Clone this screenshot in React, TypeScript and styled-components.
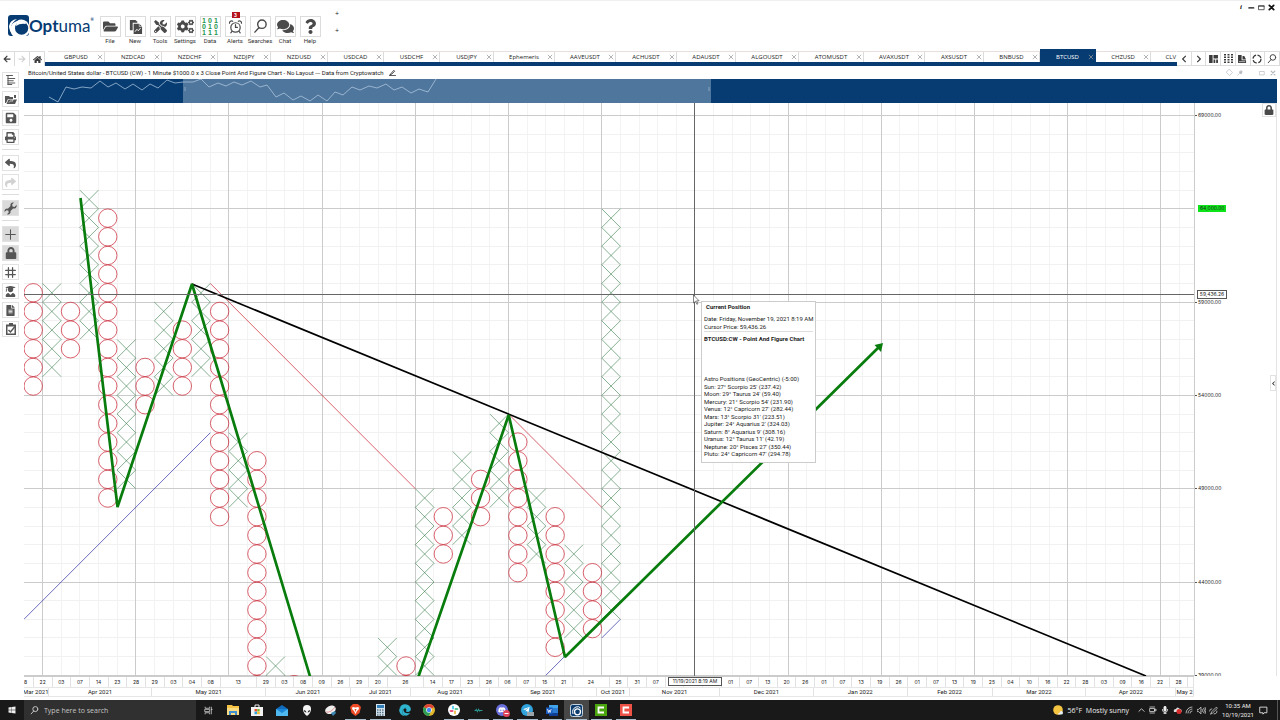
import React from "react";
import styled, { createGlobalStyle, css } from "styled-components";
import {
  FaFolderOpen, FaTools, FaCogs, FaComments, FaQuestion, FaSave, FaPrint, FaReply, FaShare,
  FaLock, FaUserGraduate, FaFileAlt, FaHome, FaArrowLeft, FaArrowRight,
  FaChevronLeft, FaChevronRight, FaWindows, FaDiscord, FaTelegramPlane, FaEdge, FaMicrophone,
} from "react-icons/fa";

const navy = "#073c73";
const line = "#dcdcdc";
const ink = "#222";
const narrow = `Roboto, "Open Sans", sans-serif`;
const figures = `Inter, "Open Sans", sans-serif`;

const GlobalStyle = createGlobalStyle`
  * { box-sizing: border-box; }
  body { margin: 0; background: #fff; color: ${ink}; font-family: "Open Sans", "Noto Sans", sans-serif; }
  button, input { font: inherit; color: inherit; margin: 0; padding: 0; border: 0; background: none; }
  svg { display: block; flex: none; }
  h1, h2, p, ul { margin: 0; padding: 0; font-size: inherit; list-style: none; }
`;

const Page = styled.div`
  display: flex;
  flex-direction: column;
  border-top: 1px solid #efefef;
`;

/* ---------- header ---------- */
const Header = styled.header`
  display: flex;
  align-items: flex-start;
  height: 50px;
  padding: 0 5px 0 8px;
`;
const Brand = styled.div`
  display: flex;
  align-items: center;
  width: 90px;
  height: 23px;
  margin-top: 13px;
  color: ${navy};
  font: 700 17px/20px Lato, sans-serif;
`;
const BrandTail = styled.span`
  font-weight: 400;
`;
const Reg = styled.span`
  align-self: flex-start;
  font-size: 4px;
  line-height: 12px;
`;
const Actions = styled.nav`
  display: flex;
  gap: 1px;
  padding-top: 15px;
`;
const Action = styled.button`
  display: flex;
  flex-direction: column;
  align-items: center;
  width: 24px;
  font-family: ${narrow};
  font-size: 6px;
  line-height: 8px;
  color: #333;
`;
const ActionIcon = styled.span`
  position: relative;
  display: flex;
  align-items: center;
  justify-content: center;
  width: 21px;
  height: 21px;
  border: 1px solid ${line};
  color: #4a4a4a;
  font-size: 15px;
`;
const Badge = styled.span`
  position: absolute;
  top: -5px;
  left: 6px;
  width: 8px;
  height: 6px;
  background: #b5121b;
  color: #fff;
  font-size: 5px;
  line-height: 6px;
  font-weight: 700;
`;
const Bits = styled.span`
  display: grid;
  grid-template-columns: repeat(3, 6px);
  font: 700 7px/6px "Liberation Sans", sans-serif;
  color: #23964f;
`;
const PlusPair = styled.div`
  display: flex;
  flex-direction: column;
  gap: 9px;
  padding: 9px 0 0 13px;
  font-size: 7px;
  line-height: 8px;
`;
const WindowKeys = styled.div`
  display: flex;
  align-items: center;
  gap: 2px;
  margin-left: auto;
  padding-top: 2px;
`;
const TinyButton = styled.button<{ $faint?: boolean }>`
  display: flex;
  align-items: center;
  justify-content: center;
  width: 8px;
  height: 8px;
  color: ${(p) => (p.$faint ? "#b4b9be" : "#111")};
  font: italic 700 7px/8px "Liberation Serif", serif;
`;

/* ---------- tab bar ---------- */
const TabBar = styled.div`
  display: flex;
  height: 15px;
`;
const NavKeys = styled.div`
  display: flex;
  width: 45px;
  border-top: 1px solid ${line};
`;
const BarKey = styled.button`
  flex: 1;
  display: flex;
  align-items: center;
  justify-content: center;
  border-right: 1px solid ${line};
  color: #3c3c3c;
  font-size: 9px;
  &:disabled { color: #d0d0d0; }
`;
const RightKeys = styled.div`
  display: flex;
  flex: none;
  width: 103px;
  border-top: 1px solid ${line};
  border-bottom: 1px solid ${line};
`;
const Tabs = styled.div`
  flex: 1;
  min-width: 0;
  height: 17px;
  margin-top: -2px;
  padding-left: 3px;
  display: flex;
  align-items: flex-end;
  overflow: hidden;
  border-bottom: 4px solid ${navy};
`;
const Tab = styled.div<{ $w: number; $active?: boolean; $last?: boolean }>`
  flex: 0 0 ${(p) => p.$w}px;
  display: grid;
  grid-template-columns: ${(p) => (p.$last ? "1fr auto 0" : "9px 1fr 9px")};
  align-items: center;
  height: 11px;
  border-top: 1px solid #e8dede;
  border-right: 1px solid ${(p) => (p.$last ? "transparent" : line)};
  font-size: 6px;
  line-height: 8px;
  padding-bottom: 1px;
  ${(p) =>
    p.$active &&
    css`
      height: 13px;
      padding-top: 2px;
      background: ${navy};
      border-color: ${navy};
      color: #fff;
    `}
`;
const TabName = styled.button`
  grid-column: 2;
  white-space: nowrap;
  text-align: center;
`;
const TabClose = styled.button`
  display: flex;
  align-items: center;
  justify-content: center;
  color: #9a9a9a;
`;

/* ---------- workspace ---------- */
const Workspace = styled.main`
  display: flex;
`;
const Tools = styled.nav`
  flex: none;
  width: 24px;
  display: flex;
  flex-direction: column;
  gap: 3px;
  padding: 6px 0 0 2px;
`;
const Tool = styled.button<{ $active?: boolean }>`
  display: flex;
  align-items: center;
  justify-content: center;
  width: 17px;
  height: 16px;
  border: 1px solid #e2e2e2;
  background: ${(p) => (p.$active ? "#dadada" : "#fff")};
  color: #555;
  font-size: 11px;
  &:disabled { color: #d2d2d2; }
`;
const ToolRule = styled.hr`
  width: 17px;
  height: 1px;
  margin: 1px 0 2px;
  border: 0;
  background: #ddd;
`;
const Content = styled.div`
  flex: 1;
  min-width: 0;
  padding-right: 3px;
`;
const TitleRow = styled.div`
  display: flex;
  align-items: center;
  gap: 5px;
  height: 13px;
  padding: 0 0 0 4px;
  font-family: ${narrow};
  font-size: 6px;
  line-height: 8px;
`;
const ChartTitle = styled.h1`
  font-weight: 400;
  white-space: nowrap;
`;
const TitleKeys = styled.div`
  display: flex;
  gap: 3px;
  margin-left: auto;
`;
const Overview = styled.div`
  height: 24px;
  background: ${navy};
  overflow: hidden;
`;
const ChartRow = styled.div`
  display: flex;
  border-right: 1px solid #e4e4e4;
`;
const Plot = styled.div`
  position: relative;
  flex: 1;
  min-width: 0;
`;
const PlotSvg = styled.svg`
  width: 100%;
  height: auto;
`;
const PriceAxis = styled.div`
  position: relative;
  flex: none;
  width: 82px;
  border-left: 1px solid #ccc;
  overflow: hidden;
`;
const PriceList = styled.div`
  display: flex;
  flex-direction: column;
  justify-content: space-between;
  height: calc(100% + 4px);
  padding-top: 8px;
`;
const Price = styled.div<{ $mark?: boolean }>`
  display: flex;
  flex: none;
  align-items: center;
  gap: 1px;
  height: 9px;
  font-family: ${figures};
  font-size: 5px;
  line-height: 7px;
  color: #222;
  &::before {
    content: "";
    width: 2px;
    height: 1px;
    background: ${(p) => (p.$mark ? "transparent" : "#555")};
  }
  span {
    padding: ${(p) => (p.$mark ? "0 2px" : "0")};
    background: ${(p) => (p.$mark ? "#0de51a" : "none")};
  }
`;
const CursorTag = styled.div`
  position: absolute;
  height: 9px;
  border: 1px solid #555;
  background: #fff;
  font-family: ${figures};
  font-size: 5px;
  line-height: 7px;
  text-align: center;
  white-space: nowrap;
`;
const PriceTag = styled(CursorTag)`
  top: 187px;
  left: 2px;
  width: 30px;
`;
const DateTag = styled(CursorTag)`
  left: 644px;
  top: 0;
  width: 54px;
`;
const LockKey = styled.button`
  position: absolute;
  top: 0;
  right: 0;
  display: flex;
  align-items: center;
  justify-content: center;
  width: 14px;
  height: 14px;
  border: 1px solid #e2e2e2;
  color: #4a4a4a;
  font-size: 10px;
`;
const CollapseKey = styled.button`
  position: absolute;
  top: 272px;
  right: 0;
  display: flex;
  align-items: center;
  justify-content: center;
  width: 6px;
  height: 16px;
  border: 1px solid #e2e2e2;
  font-size: 5px;
`;
const DateAxis = styled.div`
  position: relative;
  width: calc(100% - 83px);
  border-top: 1px solid #ccc;
  color: #222;
  font-family: ${narrow};
  font-size: 6px;
`;
const DateRow = styled.div<{ $h: number }>`
  display: flex;
  height: ${(p) => p.$h}px;
  border-bottom: 1px solid #e6e6e6;
  line-height: ${(p) => p.$h - 1}px;
  overflow: hidden;
`;
const DateCell = styled.div<{ $span: number }>`
  flex: ${(p) => p.$span} 1 0;
  min-width: 0;
  display: flex;
  justify-content: center;
  white-space: nowrap;
  overflow: hidden;
  border-right: 1px solid #e2e2e2;
`;
const DayCell = styled(DateCell)`
  font-family: ${figures};
  font-size: 5px;
  &:first-child { justify-content: flex-start; }
`;

/* ---------- cursor popup ---------- */
const Popup = styled.aside`
  position: absolute;
  top: 198px;
  left: 677px;
  width: 115px;
  height: 162px;
  padding: 1px 2px 0 2px;
  border: 1px solid #ccc;
  background: #fff;
  color: #222;
  font-family: ${narrow};
  font-size: 6px;
  line-height: 7px;
  white-space: nowrap;
`;
const PopupTitle = styled.h2`
  padding: 0 0 5px 2px;
`;
const Reading = styled.div`
  line-height: 8px;
  margin-bottom: 3px;
  border-bottom: 1px solid #ddd;
`;
const Positions = styled.ul`
  display: grid;
  grid-auto-rows: 1fr;
  height: 83px;
  margin-top: 33px;
`;

/* ---------- taskbar ---------- */
const Taskbar = styled.footer`
  display: flex;
  height: 20px;
  margin-top: 3px;
  background: #191919;
  color: #eee;
`;
const Start = styled.button`
  display: flex;
  align-items: center;
  justify-content: center;
  width: 24px;
  font-size: 8px;
`;
const Search = styled.label`
  display: flex;
  align-items: center;
  gap: 5px;
  width: 172px;
  padding-left: 6px;
  background: #303030;
  color: #ddd;
  input {
    flex: 1;
    min-width: 0;
    outline: 0;
    font-size: 7px;
  }
  input::placeholder { color: #c4c4c4; opacity: 1; }
`;
const Apps = styled.div`
  display: flex;
  width: 442px;
`;
const AppKey = styled.button<{ $open?: boolean; $active?: boolean }>`
  flex: 1;
  position: relative;
  display: flex;
  align-items: center;
  justify-content: center;
  background: ${(p) => (p.$active ? "#474747" : "none")};
  &::after {
    content: "";
    position: absolute;
    bottom: 0;
    left: 2px;
    right: 2px;
    height: 1px;
    background: ${(p) => (p.$open ? "#a9bccb" : "transparent")};
  }
`;
const Tray = styled.div`
  display: flex;
  align-items: center;
  gap: 2px;
  margin: 0 2px 0 auto;
  padding-right: 9px;
  border-right: 1px solid #555;
  font-size: 7px;
`;
const Weather = styled.button`
  display: flex;
  align-items: center;
  gap: 5px;
  margin-right: 5px;
  white-space: pre;
`;
const TrayKey = styled.button`
  display: flex;
  align-items: center;
  justify-content: center;
  width: 10px;
  height: 20px;
`;
const Clock = styled.time`
  width: 36px;
  font-family: ${narrow};
  font-size: 6px;
  line-height: 9px;
  text-align: center;
`;

/* ---------- icons ---------- */
const Stroke = ({ d, size = 10, w = 1, box = 16, fill = "none" }: { d: string; size?: number; w?: number; box?: number; fill?: string }) => (
  <svg width={size} height={size} viewBox={`0 0 ${box} ${box}`} fill={fill} stroke="currentColor" strokeWidth={w} strokeLinecap="round">
    <path d={d} />
  </svg>
);
const Cross = ({ size = 5, w = 2 }) => <Stroke d="M3 3 13 13M13 3 3 13" size={size} w={w} />;
const LensLeft = ({ size = 15 }) => <Stroke size={size} w={1.5} d="M14 5.5a4.5 4.5 0 1 1-9 0a4.5 4.5 0 1 1 9 0M6.5 9 2 14" />;
const Alarm = () => (
  <Stroke size={15} w={1.3} d="M13 9a5 5 0 1 1-10 0a5 5 0 1 1 10 0M8 6v3h2M1.6 4.5A2.2 2.2 0 0 1 5 2.4M14.4 4.5A2.2 2.2 0 0 0 11 2.4M4.4 13 3 14.8M11.6 13 13 14.8" />
);
const NewPages = () => (
  <svg width="15" height="15" viewBox="0 0 16 16" fill="currentColor">
    <path d="M2 1h6l2 2v1H5v8H2zM6 5h6l3 3v8H6z" />
    <path d="M7.5 13.5 9.5 11l1.5 1.5 2.5-3" fill="none" stroke="#fff" />
    <path d="M12 5v3h3" fill="none" stroke="#fff" strokeWidth=".6" />
  </svg>
);
const Mark = ({ size = 21 }) => (
  <svg width={size} height={size} viewBox="0 0 21 21">
    <path d="M3 0h15a3 3 0 0 1 3 3v15q0 3-3 3H3a3 3 0 0 1-3-3V3a3 3 0 0 1 3-3" fill={navy} />
    <path d="M5 21a9 9 0 0 1 4-15 8 8 0 0 1 12 4v3a7 7 0 0 1-3 8z" fill="#fff" />
    <circle cx="13.6" cy="13.2" r="6.6" fill={navy} />
    <path d="M8 11q0-5 6-5 3 0 4 3-6-1-10 2" fill="#fff" />
    <path d="M1 11q1-6 8-7-6 4-6 9 0 3 2 6-4-3-4-8" fill="#fff" />
  </svg>
);
const Tree = () => <Stroke d="M2 2h8M4 2v12M4 6h9M4 9h7M4 12h9M4 14h5" size={12} w={1.3} />;
const OpenChart = () => (
  <svg width="13" height="11" viewBox="0 0 13 11" fill="currentColor">
    <path d="M1 2h4l1 1h3v2H4L2 9H1zM4.500 5.500H13L11 10H2.500z" />
    <path d="M5 8.500 7 6.500l1 1 3-5" fill="none" stroke="#fff" strokeWidth=".7" />
    <path d="M10 1h2v3h-2z" />
  </svg>
);
const ClipCheck = () => (
  <svg width="12" height="12" viewBox="0 0 12 12" fill="currentColor">
    <path d="M4 0h4v1.500h3V12H1V1.500h3z" />
    <path d="M2.500 3.500h7v7h-7z" fill="#fff" />
    <path d="M3.500 7 5.500 9 10 3.500" fill="none" stroke="currentColor" strokeWidth="1.500" />
  </svg>
);
const Spanner = () => (
  <svg width="13" height="13" viewBox="0 0 16 16" fill="currentColor">
    <path d="M15.500 3.500 13 6l-2.500-.6L10 3 12.300.6Q9.500 0 8.300 2 7.500 3.500 8 5L4.800 8.200Q3 7.700 1.600 8.800.2 10 .6 12.200L3 10l2.300.6.6 2.300L3.700 15.200q2.300.5 3.700-1Q8.500 13 8 11.200L11.200 8q2 .5 3.300-.7 1.500-1.500 1-3.800" />
  </svg>
);
const Panels = () => (
  <svg width="9" height="8" viewBox="0 0 10 9" fill="currentColor"><path d="M0 0h4v9H0zM5 0h5v4H5zM5 5h2v4H5zM8 5h2v4H8z" /></svg>
);
const Dots = () => (
  <svg width="9" height="9" viewBox="0 0 9 9" fill="currentColor">
    <path d="M0 0h2v1.500H0zM3.500 0h2v1.500h-2zM7 0h2v1.500H7zM0 2.500h2V4H0zM3.500 2.500h2V4h-2zM7 2.500h2V4H7zM0 5h2v1.500H0zM3.500 5h2v1.500h-2zM7 5h2v1.500H7zM0 7.500h2V9H0zM3.500 7.500h2V9h-2zM7 7.500h2V9H7z" />
  </svg>
);
const PageSend = () => (
  <svg width="9" height="8" viewBox="0 0 10 9" fill="currentColor"><path d="M0 0h4v6h5v3H0zM5 1h2l2 4H5z" /><path d="M1 7.500h7" stroke="#fff" strokeWidth=".7" /></svg>
);

/* ---------- chart data ---------- */
const COL = 18.64;
const ROW = 18.66;
const gx = (i: number) => i * COL - 0.1;
const gy = (r: number) => 12.5 + r * ROW;

/* [column, first row, last row] */
const rising: number[][] = [
  [1, 9, 13], [3, 4, 11], [5, 12, 19], [7, 10, 14], [9, 9, 13], [11, 17, 20], [13, 29, 30], [19, 28, 29],
  [21, 20, 29], [23, 18, 22], [25, 16, 20], [27, 20, 23], [29, 23, 27], [31, 5, 26],
];
const falling: number[][] = [
  [0, 9, 14], [2, 10, 12], [4, 5, 20], [6, 13, 15], [8, 11, 14], [10, 10, 21], [12, 18, 30], [14, 30, 30],
  [20, 29, 30], [22, 21, 23], [24, 19, 21], [26, 17, 24], [28, 21, 28], [30, 24, 27],
];
const expand = (runs: number[][]) =>
  runs.flatMap(([c, a, b]) => Array.from({ length: b - a + 1 }, (_, k) => [c, a + k]));
const range = (n: number) => Array.from({ length: n }, (_, i) => i);

const Plotting = () => (
  <PlotSvg viewBox="0 0 1170 573" role="img" aria-label="Point and figure chart">
    <g shapeRendering="crispEdges" strokeWidth="1">
      {range(63).map((i) => i % 5 !== 1 && <path key={i} d={`M${gx(i)} 0V573`} stroke="#f3f3f3" />)}
      {range(31).map((r) => r % 5 !== 0 && <path key={r} d={`M0 ${gy(r)}H1170`} stroke="#f1f1f1" />)}
      {range(13).map((i) => <path key={i} d={`M${gx(i * 5 + 1)} 0V573`} stroke="#cbcbcb" />)}
      {range(7).map((r) => <path key={r} d={`M0 ${gy(r * 5)}H1170`} stroke="#cbcbcb" />)}
    </g>
    <g fill="none" stroke="#357a48" strokeWidth=".6">
      {expand(rising).map(([c, r]) => (
        <path key={`${c}-${r}`} d={`M${gx(c)} ${gy(r)}L${gx(c + 1)} ${gy(r + 1)}M${gx(c + 1)} ${gy(r)}L${gx(c)} ${gy(r + 1)}`} />
      ))}
    </g>
    <g fill="none" stroke="#c8202f" strokeWidth=".7">
      {expand(falling).map(([c, r]) => (
        <circle key={`${c}-${r}`} cx={gx(c + 0.5)} cy={gy(r + 0.5)} r="9.200" />
      ))}
      <path d={`M${gx(10)} ${gy(9)}L${gx(21)} ${gy(20)}M${gx(26)} ${gy(16)}L${gx(31)} ${gy(21)}`} />
    </g>
    <path
      d={`M${gx(0)} ${gy(27)}L${gx(10)} ${gy(17)}M${gx(28)} ${gy(30)}L${gx(29)} ${gy(29)}M${gx(31)} ${gy(28)}L${gx(32)} ${gy(27)}`}
      fill="none" stroke="#2c2ca0" strokeWidth=".7"
    />
    <path d="M168 181 1122 573" stroke="#000" strokeWidth="1.700" />
    <g fill="none" stroke="#087c0c" strokeWidth="2.700" strokeLinejoin="miter" strokeMiterlimit="2">
      <path d="M56.500 95 93.500 404 168 181 286.500 575" />
      <path d="M394 575 484.700 312 541 554 856 243" />
    </g>
    <path d="M859 240 850.500 242 857 249z" fill="#087c0c" />
    <g shapeRendering="crispEdges" stroke="#666">
      <path d="M670.500 0V573M0 191.500H1170" />
    </g>
    <path d="M669.500 192V200l2-1.700 1.400 3 1-.5-1.300-3h2.500z" fill="#fff" stroke="#333" strokeWidth=".6" />
  </PlotSvg>
);

const overviewPoints =
  "25,18 34,23 42,8 50,10 58,8 67,9 76,2 84,8 92,4 101,10 109,5 118,11 126,5 134,9 143,1 151,4 159,3 169,3 177,0 185,8 194,4 202,7 210,3 218,6 227,2 236,8 243,6 252,18 260,14 269,21 277,17 286,22 294,16 303,22 311,13 319,16 328,8 336,11 345,7 353,9 362,5 370,11 378,8 387,14 395,10 404,13 412,0";

const tabs: [string, number][] = [
  ["GBPUSD", 57], ["NZDCAD", 57], ["NZDCHF", 56], ["NZDJPY", 53], ["NZDUSD", 57], ["USDCAD", 56], ["USDCHF", 56],
  ["USDJPY", 54], ["Ephemeris", 61], ["AAVEUSDT", 61], ["ACHUSDT", 61], ["ADAUSDT", 59], ["ALGOUSDT", 63],
  ["ATOMUSDT", 65], ["AVAXUSDT", 61], ["AXSUSDT", 59], ["BNBUSD", 56], ["BTCUSD", 56], ["CHZUSD", 55],
];

const one = (d: string): [string, number] => [d, 1];
const days: [string, number][] = [
  ["8", 0.5],
  ...["22", "03", "07", "14", "23", "28", "29", "03", "04", "08"].map(one),
  ["13", 2],
  ...["29", "03", "08", "09", "26", "29", "20"].map(one),
  ["26", 2],
  ...["14", "17", "23", "26", "06", "07", "15", "21"].map(one),
  ["24", 2],
  ...["25", "31", "07", "", "", ""].map(one),
  ...["01", "07", "13", "20", "26", "01", "07", "13", "19", "26", "01", "07", "13"].map(one),
  ...["19", "25", "04", "10", "16", "22", "28", "03", "09", "16", "22", "28"].map(one),
  ["", 0.27],
];
const months: [string, number][] = [
  ["Mar 2021", 24], ["Apr 2021", 104], ["May 2021", 114], ["Jun 2021", 85], ["Jul 2021", 60], ["Aug 2021", 79],
  ["Sep 2021", 107], ["Oct 2021", 33], ["Nov 2021", 90], ["Dec 2021", 94], ["Jan 2022", 94], ["Feb 2022", 85],
  ["Mar 2022", 94], ["Apr 2022", 90], ["May 2", 17],
];
const positions = [
  "Astro Positions (GeoCentric) (-5:00)", "Sun: 27° Scorpio 25' (237.42)", "Moon: 29° Taurus 24' (59.40)",
  "Mercury: 21° Scorpio 54' (231.90)", "Venus: 12° Capricorn 27' (282.44)", "Mars: 13° Scorpio 31' (223.51)",
  "Jupiter: 24° Aquarius 2' (324.03)", "Saturn: 8° Aquarius 9' (308.16)", "Uranus: 12° Taurus 11' (42.19)",
  "Neptune: 20° Pisces 27' (350.44)", "Pluto: 24° Capricorn 47' (294.78)",
];

const actions: [string, React.ReactNode][] = [
  ["File", <FaFolderOpen />],
  ["New", <NewPages />],
  ["Tools", <FaTools size={13} />],
  ["Settings", <FaCogs size={17} />],
  ["Data", <Bits>{"101010111".split("").map((b, i) => <span key={i}>{b}</span>)}</Bits>],
  ["Alerts", <><Alarm /><Badge>3</Badge></>],
  ["Searches", <LensLeft />],
  ["Chat", <FaComments size={17} />],
  ["Help", <FaQuestion />],
];

const apps: { name: string; icon: React.ReactNode; open?: boolean; active?: boolean }[] = [
  { name: "Task view", icon: <Stroke d="M2 2v2h8V2M2 14v-2h8v2M2 6h8v4H2zM13 2v12M13 6h1.500" size={9} w={1.2} /> },
  {
    name: "Explorer",
    icon: <svg width="12" height="10" viewBox="0 0 12 10"><path d="M0 0h5l1 1h6v9H0z" fill="#f6c445" /><path d="M0 3h12v7H0z" fill="#fbdc83" /><path d="M2 6h8v4H8V8H4v2H2z" fill="#3f8fd0" /></svg>,
  },
  {
    name: "Store",
    icon: <svg width="12" height="12" viewBox="0 0 12 12"><path d="M0 3h12v9H0z" fill="#f2f2f2" /><path d="M4 3V1h4v2" fill="none" stroke="#eee" /><path d="M3.500 5H6v2.500H3.500z" fill="#e8502f" /><path d="M6.200 5h2.500v2.500H6.200z" fill="#7db53c" /><path d="M3.500 7.700H6v2.500H3.500z" fill="#2ba4e0" /><path d="M6.200 7.700h2.500v2.500H6.200z" fill="#f6ba27" /></svg>,
  },
  {
    name: "Mail",
    icon: <svg width="12" height="11" viewBox="0 0 12 11"><path d="M0 4 6 0l6 4v7H0z" fill="#0f6cbd" /><path d="M1 4h10v2L6 8 1 6z" fill="#1c86d6" /><path d="M0 4l6 4 6-4v7H0z" fill="#4fb8ef" /></svg>,
  },
  {
    name: "Alienware",
    icon: <svg width="8" height="11" viewBox="0 0 8 11"><path d="M4 0q4 0 4 4 0 4-4 7Q0 8 0 4 0 0 4 0" fill="#f4f4f4" /><path d="M1 5q2 0 2.500 2.500Q1 7.500 1 5M7 5q-2 0-2.500 2.500Q7 7.500 7 5" fill="#222" /></svg>,
  },
  {
    name: "Snip",
    icon: <svg width="12" height="11" viewBox="0 0 12 11"><ellipse cx="5.500" cy="5" rx="5.500" ry="4" fill="#f0eeee" transform="rotate(-25 5 5)" /><path d="M1 7q5 1 9-5" stroke="#d87070" fill="none" strokeWidth=".7" /><path d="M6 8l4-2 1 2-3 3z" fill="#3d87b5" /></svg>,
  },
  {
    name: "Brave", open: true,
    icon: <svg width="11" height="12" viewBox="0 0 11 12"><path d="M3 0h5l3 3-1.500 6-4 3-4-3L0 3z" fill="#ee4b26" /><path d="M2.500 3 5.500 3.500 8.500 3 9 5 7 7l-1.500 3L4 7 2 5z" fill="#fff" /><path d="M4.500 5h2l-1 3z" fill="#ee4b26" /></svg>,
  },
  {
    name: "Calculator", open: true,
    icon: <svg width="9" height="12" viewBox="0 0 9 12"><path d="M0 0h9v12H0z" fill="#d5e4ee" /><path d="M1 1h7v3H1z" fill="#2f7eb5" /><path d="M1 6h7M1 8.500h7M1 11h7" stroke="#5a7384" strokeWidth="1.500" strokeDasharray="1.500 1" /></svg>,
  },
  { name: "Edge", icon: <FaEdge size={12} color="#2fb4cf" /> },
  {
    name: "Chrome",
    icon: <svg width="12" height="12" viewBox="0 0 12 12"><circle cx="6" cy="6" r="6" fill="#e2b72b" /><path d="M6 6 .8 3A6 6 0 0 1 11.200 3z" fill="#dc4437" /><path d="M6 6 .8 3A6 6 0 0 0 6 12L8 7z" fill="#2f9e55" /><circle cx="6" cy="6" r="2.800" fill="#fff" /><circle cx="6" cy="6" r="2.200" fill="#4285f4" /></svg>,
  },
  {
    name: "Slack", open: true,
    icon: <svg width="12" height="12" viewBox="0 0 12 12"><circle cx="6" cy="6" r="6" fill="#fff" /><g strokeWidth="1.600" strokeLinecap="round"><path d="M5 2.500v2.200" stroke="#36c5f0" /><path d="M7.300 5H9.500" stroke="#2eb67d" /><path d="M7 7.300V9.500" stroke="#ecb22e" /><path d="M2.500 7h2.200" stroke="#e01e5a" /></g></svg>,
  },
  { name: "Monitor", open: true, icon: <svg width="9" height="9" viewBox="0 0 16 16" fill="none" stroke="#2a9a94" strokeWidth="1.800"><path d="M1 8h2l1-2 2 4 2-4 2 3 1-1h4" /></svg> },
  {
    name: "Discord", open: true,
    icon: <svg width="14" height="13" viewBox="0 0 14 13"><circle cx="6" cy="6" r="6" fill="#6b6fdc" /><g color="#fff"><FaDiscord x="2" y="2" size={8} /></g><circle cx="10.500" cy="9.500" r="3.500" fill="#e0435a" /><path d="M8.500 9.500h4" stroke="#fff" /></svg>,
  },
  {
    name: "Telegram", open: true,
    icon: <svg width="14" height="13" viewBox="0 0 14 13"><circle cx="6" cy="6" r="6" fill="#30a3dc" /><g color="#fff"><FaTelegramPlane x="2" y="2" size={7} /></g><path d="M6 8h7v4H6z" fill="#9aa5ab" /></svg>,
  },
  {
    name: "Word", open: true,
    icon: <svg width="12" height="11" viewBox="0 0 12 11"><path d="M3 0h9v11H3z" fill="#2b7cd3" /><path d="M3 0h9v3H3z" fill="#41a5ee" /><path d="M3 8h9v3H3z" fill="#103f91" /><path d="M0 2.500h6.500v6.500H0z" fill="#185abd" /><path d="M1.500 4l1 3.500L3.300 5l.8 2.500L5.200 4" stroke="#fff" strokeWidth=".8" fill="none" /></svg>,
  },
  { name: "Optuma", active: true, open: true, icon: <svg width="13" height="13" viewBox="0 0 13 13"><rect x=".5" y=".5" width="12" height="12" rx="2" fill="#0d3d6e" stroke="#c5d3df" /><circle cx="7.500" cy="7.800" r="3" fill="none" stroke="#fff" strokeWidth="1.300" /><path d="M3 10Q1.500 5 6 3q3-1 4.500 1" fill="none" stroke="#fff" /></svg> },
  { name: "Camtasia", open: true, icon: <svg width="12" height="12" viewBox="0 0 12 12"><path d="M0 0h12v12H0z" fill="#4aa50e" /><path d="M9 3.500H3.500v5H9" stroke="#fff" strokeWidth="1.800" fill="none" /></svg> },
  { name: "Recorder", open: true, icon: <svg width="12" height="12" viewBox="0 0 12 12"><path d="M0 0h12v12H0z" fill="#ee5247" /><path d="M9 3.500H3.500v5H9" stroke="#fff" strokeWidth="1.800" fill="none" /></svg> },
];

export default function App() {
  return (
    <Page>
      <GlobalStyle />
      <Header>
        <Brand><Mark /><span>Opt<BrandTail>uma</BrandTail></span><Reg>®</Reg></Brand>
        <Actions>
          {actions.map(([name, icon]) => (
            <Action key={name}><ActionIcon>{icon}</ActionIcon>{name}</Action>
          ))}
        </Actions>
        <PlusPair><button>+</button><button>+</button></PlusPair>
        <WindowKeys>
          <TinyButton>i</TinyButton>
          <TinyButton aria-label="Minimise"><Stroke d="M2 9h11" size={7} w={3} /></TinyButton>
          <TinyButton aria-label="Restore"><Stroke d="M2 4h12v9H2zM2 5h12" size={7} w={1.5} /></TinyButton>
          <TinyButton aria-label="Close"><Cross size={7} w={4} /></TinyButton>
        </WindowKeys>
      </Header>

      <TabBar>
        <NavKeys>
          <BarKey aria-label="Back"><FaArrowLeft size={8} /></BarKey>
          <BarKey aria-label="Forward" disabled><FaArrowRight size={8} /></BarKey>
          <BarKey aria-label="Home"><FaHome /></BarKey>
        </NavKeys>
        <Tabs>
          {tabs.map(([name, w]) => (
            <Tab key={name} $w={w} $active={name === "BTCUSD"}>
              <TabName>{name}</TabName>
              <TabClose aria-label={`Close ${name}`}><Cross size={6} /></TabClose>
            </Tab>
          ))}
          <Tab $w={26} $last><TabName>CLV</TabName></Tab>
        </Tabs>
        <RightKeys>
          <BarKey aria-label="Previous"><FaChevronLeft size={8} /></BarKey>
          <BarKey aria-label="Next"><FaChevronRight size={8} /></BarKey>
          <BarKey aria-label="Layouts"><Panels /></BarKey>
          <BarKey aria-label="Grid"><Dots /></BarKey>
          <BarKey aria-label="Send page"><PageSend /></BarKey>
          <BarKey aria-label="Refresh"><svg width="10" height="10" viewBox="0 0 10 10"><circle cx="5" cy="5" r="4" fill="none" stroke="currentColor" strokeWidth="1.200" strokeDasharray="4.800 1.500" /></svg></BarKey>
          <BarKey aria-label="Find"><LensLeft size={10} /></BarKey>
        </RightKeys>
      </TabBar>

      <Workspace>
        <Tools>
          <Tool aria-label="Structure"><Tree /></Tool>
          <Tool aria-label="Open chart"><OpenChart /></Tool>
          <Tool aria-label="Save"><FaSave size={12} /></Tool>
          <Tool aria-label="Print"><FaPrint /></Tool>
          <ToolRule />
          <Tool aria-label="Undo"><FaReply /></Tool>
          <Tool aria-label="Redo" disabled><FaShare /></Tool>
          <ToolRule />
          <Tool aria-label="Properties" $active><Spanner /></Tool>
          <ToolRule />
          <Tool aria-label="Crosshair" $active><Stroke d="M8 1v14M1 8h14" size={11} w={1.5} /></Tool>
          <Tool aria-label="Lock" $active><FaLock size={12} /></Tool>
          <Tool aria-label="Grid lines"><Stroke d="M5 1v14M11 1v14M1 5h14M1 11h14" size={11} w={1.8} /></Tool>
          <Tool aria-label="Training"><FaUserGraduate /></Tool>
          <Tool aria-label="Notes"><FaFileAlt /></Tool>
          <Tool aria-label="Checklist"><ClipCheck /></Tool>
        </Tools>

        <Content>
          <TitleRow>
            <ChartTitle>Bitcoin/United States dollar - BTCUSD (CW) - 1 Minute $1000.0 x 3 Close Point And Figure Chart - No Layout --- Data from Cryptowatch</ChartTitle>
            <Stroke d="M4 11 11 3l2 2-7 7-3 1zM1 15h14" size={7} w={1.8} />
            <TitleKeys>
              <TinyButton $faint aria-label="Move"><Stroke d="M8 1 15 8 8 15 1 8z" size={7} w={1.6} /></TinyButton>
              <TinyButton $faint aria-label="Pin"><Stroke d="M2 14 7 9M6 6l5 5 3-7-3-2z" size={6} w={1.6} fill="currentColor" /></TinyButton>
              <TinyButton as="span" />
              <TinyButton $faint aria-label="Maximise"><Stroke d="M2 4h12v9H2z" size={6} w={1.8} /></TinyButton>
              <TinyButton $faint aria-label="Close chart"><Cross size={6} w={3.5} /></TinyButton>
            </TitleKeys>
          </TitleRow>
          <Overview>
            <svg width="1253" height="24" viewBox="0 0 1253 24">
              <rect x="159" width="528" height="24" fill="#4f769c" />
              <path d="M161 8v4M685 8v4" stroke="#8ba6c0" />
              <polyline points={overviewPoints} fill="none" stroke="#b9d0e6" strokeWidth=".7" />
            </svg>
          </Overview>
          <ChartRow>
            <Plot>
              <Plotting />
              <Popup>
                <PopupTitle>Current Position</PopupTitle>
                <Reading>
                  <p>Date: Friday, November 19, 2021 8:19 AM</p>
                  <p>Cursor Price: 59,436.26</p>
                </Reading>
                <h2>BTCUSD:CW - Point And Figure Chart</h2>
                <Positions>{positions.map((p) => <li key={p}>{p}</li>)}</Positions>
              </Popup>
            </Plot>
            <PriceAxis>
              <PriceList>
                <Price><span>69000.00</span></Price>
                <Price $mark><span>64,000.00</span></Price>
                <Price><span>59000.00</span></Price>
                <Price><span>54000.00</span></Price>
                <Price><span>49000.00</span></Price>
                <Price><span>44000.00</span></Price>
                <Price><span>39000.00</span></Price>
              </PriceList>
              <PriceTag>59,436.26</PriceTag>
              <LockKey aria-label="Lock scale"><FaLock /></LockKey>
              <CollapseKey aria-label="Show panel"><FaChevronLeft /></CollapseKey>
            </PriceAxis>
          </ChartRow>
          <DateAxis>
            <DateRow $h={11}>{days.map(([d, s], i) => <DayCell key={i} $span={s}>{d}</DayCell>)}</DateRow>
            <DateRow $h={9}>{months.map(([m, s]) => <DateCell key={m} $span={s}>{m}</DateCell>)}</DateRow>
            <DateTag>11/19/2021 8:19 AM</DateTag>
          </DateAxis>
        </Content>
      </Workspace>

      <Taskbar>
        <Start aria-label="Start"><FaWindows /></Start>
        <Search>
          <LensLeft size={9} />
          <input type="text" placeholder="Type here to search" aria-label="Type here to search" />
        </Search>
        <Apps>
          {apps.map((a) => <AppKey key={a.name} aria-label={a.name} $open={a.open} $active={a.active}>{a.icon}</AppKey>)}
        </Apps>
        <Tray>
          <Weather>
            <svg width="10" height="10" viewBox="0 0 10 10"><circle cx="5" cy="5" r="4.800" fill="#f5c542" /><path d="M5 9.500q0-2 2-2 0-2 1.500-1.500Q10 6 10 8q0 1.500-2 1.500z" fill="#e7eef4" /></svg>
            <span>56°F  Mostly sunny</span>
          </Weather>
          <TrayKey aria-label="Show hidden icons"><Stroke d="M2 10 8 4l6 6" size={7} w={1.8} /></TrayKey>
          <TrayKey aria-label="Meet now"><Stroke d="M2 2h9M2 14h9M2 5h9v6H2zM11 7l3-1v4l-3-1" size={8} w={1.4} /></TrayKey>
          <TrayKey aria-label="Microphone"><FaMicrophone size={8} /></TrayKey>
          <TrayKey aria-label="Cloud"><svg width="9" height="8" viewBox="0 0 9 8"><path d="M1 6Q0 3 3 3q1-3 4 0 2 0 1.500 3z" fill="#ddd" /><circle cx="6" cy="5.500" r="2.500" fill="#d82c2c" /></svg></TrayKey>
          <TrayKey aria-label="Network"><Stroke d="M2 14A12 12 0 0 1 14 2M6 14a8 8 0 0 1 8-8M10 14a4 4 0 0 1 4-4" size={8} w={1.4} /></TrayKey>
          <TrayKey aria-label="Volume"><Stroke d="M1 6h2l4-4v12l-4-4H1zM9.500 6q1.500 2 0 4M12 4q3 4 0 8M14.500 2.500q3 5 0 11" size={9} w={1.2} /></TrayKey>
          <TrayKey aria-label="Pen"><Stroke d="M3 14 5 10 13 2l2 2-8 8zM1 9q0-4 4-4M9 14q6 0 5-5" size={9} w={1.2} /></TrayKey>
          <Clock>10:35 AM<br />10/19/2021</Clock>
          <TrayKey aria-label="Notifications"><Stroke d="M2 2h12v10H9l-2 2.500V12H2z" size={9} w={1.5} /></TrayKey>
        </Tray>
      </Taskbar>
    </Page>
  );
}
